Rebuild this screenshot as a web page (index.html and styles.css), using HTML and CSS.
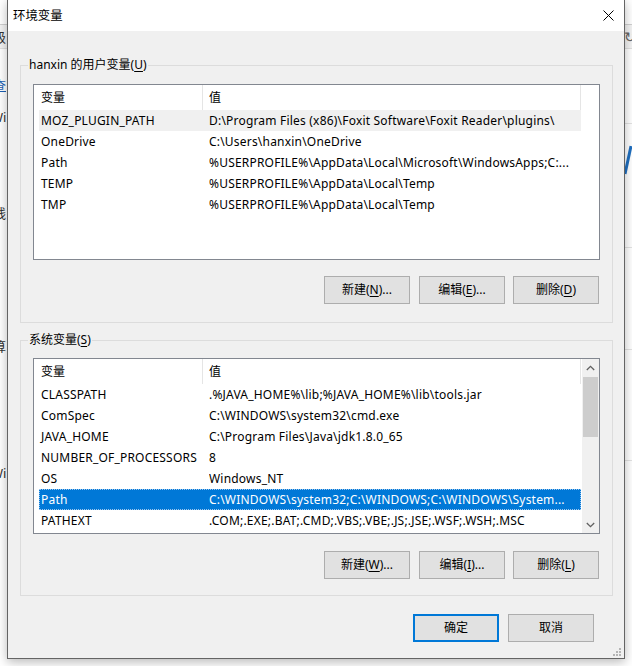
FILE: index.html
```html
<!DOCTYPE html>
<html lang="zh-CN">
<head>
<meta charset="utf-8">
<title>环境变量</title>
<link rel="stylesheet" href="styles.css">
</head>
<body>
<div class="desktop">
  <div class="behind">
    <div class="bh-band"></div>
    <span class="bh-t bh-1">级</span>
    <span class="bh-t bh-link">查</span>
    <span class="bh-t bh-3">Wi</span>
    <span class="bh-t bh-4">线</span>
    <span class="bh-t bh-5">算</span>
    <span class="bh-t bh-6">Wi</span>
    <span class="bh-refresh">↻</span>
    <div class="bh-hl bh-hl1"></div>
    <div class="bh-hl bh-hl2"></div>
    <div class="bh-hl bh-hl3"></div>
    <div class="bh-hl bh-hl4"></div>
    <svg class="bh-chart" width="8" height="40" viewBox="0 0 8 40"><path d="M1 34 L7 6" stroke="#1f6fc0" stroke-width="3" fill="none"/></svg>
  </div>

  <div class="dialog">
    <div class="titlebar">
      <span class="title">环境变量</span>
      <svg class="close" width="11" height="11" viewBox="0 0 11 11"><path d="M0.5 0.5 L10.5 10.5 M10.5 0.5 L0.5 10.5" stroke="#000" stroke-width="1" fill="none"/></svg>
    </div>
    <div class="body">
      <div class="group group-user">
        <span class="group-label">hanxin 的用户变量(<u>U</u>)</span>
        <div class="list list-user">
          <div class="list-main">
            <div class="hdr">
              <div class="hc1">变量</div>
              <div class="hc2">值</div>
              <div class="hc3"></div>
            </div>
            <div class="row row-hover"><div class="c1">MOZ_PLUGIN_PATH</div><div class="c2">D:\Program Files (x86)\Foxit Software\Foxit Reader\plugins\</div></div>
            <div class="row"><div class="c1">OneDrive</div><div class="c2">C:\Users\hanxin\OneDrive</div></div>
            <div class="row"><div class="c1">Path</div><div class="c2">%USERPROFILE%\AppData\Local\Microsoft\WindowsApps;C:...</div></div>
            <div class="row"><div class="c1">TEMP</div><div class="c2">%USERPROFILE%\AppData\Local\Temp</div></div>
            <div class="row"><div class="c1">TMP</div><div class="c2">%USERPROFILE%\AppData\Local\Temp</div></div>
          </div>
        </div>
        <div class="btns btns-user">
          <button class="btn">新建(<u>N</u>)...</button>
          <button class="btn">编辑(<u>E</u>)...</button>
          <button class="btn">删除(<u>D</u>)</button>
        </div>
      </div>

      <div class="group group-sys">
        <span class="group-label">系统变量(<u>S</u>)</span>
        <div class="list list-sys">
          <div class="list-main">
            <div class="hdr">
              <div class="hc1">变量</div>
              <div class="hc2">值</div>
              <div class="hc3"></div>
            </div>
            <div class="row"><div class="c1">CLASSPATH</div><div class="c2">.%JAVA_HOME%\lib;%JAVA_HOME%\lib\tools.jar</div></div>
            <div class="row"><div class="c1">ComSpec</div><div class="c2">C:\WINDOWS\system32\cmd.exe</div></div>
            <div class="row"><div class="c1">JAVA_HOME</div><div class="c2">C:\Program Files\Java\jdk1.8.0_65</div></div>
            <div class="row"><div class="c1">NUMBER_OF_PROCESSORS</div><div class="c2">8</div></div>
            <div class="row"><div class="c1">OS</div><div class="c2">Windows_NT</div></div>
            <div class="row row-selected"><div class="c1">Path</div><div class="c2">C:\WINDOWS\system32;C:\WINDOWS;C:\WINDOWS\System...</div></div>
            <div class="row"><div class="c1">PATHEXT</div><div class="c2">.COM;.EXE;.BAT;.CMD;.VBS;.VBE;.JS;.JSE;.WSF;.WSH;.MSC</div></div>
          </div>
          <div class="vscroll">
            <div class="sb-arrow">
              <svg width="9" height="6" viewBox="0 0 9 6"><path d="M0.8 5 L4.5 1.3 L8.2 5" stroke="#606060" stroke-width="1.3" fill="none"/></svg>
            </div>
            <div class="sb-track">
              <div class="sb-thumb"></div>
            </div>
            <div class="sb-arrow">
              <svg width="9" height="6" viewBox="0 0 9 6"><path d="M0.8 1 L4.5 4.7 L8.2 1" stroke="#606060" stroke-width="1.3" fill="none"/></svg>
            </div>
          </div>
        </div>
        <div class="btns btns-sys">
          <button class="btn">新建(<u>W</u>)...</button>
          <button class="btn">编辑(<u>I</u>)...</button>
          <button class="btn">删除(<u>L</u>)</button>
        </div>
      </div>

      <div class="footer">
        <button class="btn btn-default">确定</button>
        <button class="btn">取消</button>
      </div>
    </div>
    <svg class="grip" width="9" height="9" viewBox="0 0 9 9">
      <rect x="6" y="0" width="2" height="2" fill="#b4b4b4"/>
      <rect x="3" y="3" width="2" height="2" fill="#b4b4b4"/>
      <rect x="6" y="3" width="2" height="2" fill="#b4b4b4"/>
      <rect x="0" y="6" width="2" height="2" fill="#b4b4b4"/>
      <rect x="3" y="6" width="2" height="2" fill="#b4b4b4"/>
      <rect x="6" y="6" width="2" height="2" fill="#b4b4b4"/>
    </svg>
  </div>
</div>
</body>
</html>
```

FILE: styles.css
```css
* { box-sizing: border-box; }
html, body { margin: 0; padding: 0; }
body {
  width: 632px;
  height: 666px;
  overflow: hidden;
  font-family: "Noto Sans", "Noto Sans CJK SC", sans-serif;
  font-size: 12px;
  color: #000;
  background: #fff;
}
u { text-decoration: underline; text-underline-offset: 2px; }

.desktop {
  position: relative;
  width: 632px;
  height: 666px;
  overflow: hidden;
  background: #fff;
}

/* window behind the dialog */
.behind { position: absolute; inset: 0; }
.bh-band {
  position: absolute; left: 0; right: 0; top: 24px; height: 25px;
  background: #f3f3f3;
  border-top: 1px solid #d0d0d0;
  border-bottom: 1px solid #e0e0e0;
}
.bh-t { position: absolute; left: -7px; font-size: 13px; line-height: 16px; color: #333; }
.bh-1 { top: 29px; }
.bh-link { top: 77px; color: #1a5fb4; text-decoration: underline; }
.bh-3 { top: 109px; left: -9px; }
.bh-4 { top: 205px; }
.bh-5 { top: 338px; }
.bh-6 { top: 465px; left: -9px; }
.bh-refresh { position: absolute; left: 624px; top: 28px; font-size: 14px; line-height: 18px; color: #666; }
.bh-hl { position: absolute; left: 624px; right: 0; height: 1px; background: #e3e3e3; }
.bh-hl1 { top: 123px; }
.bh-hl2 { top: 247px; }
.bh-hl3 { top: 349px; }
.bh-hl4 { top: 460px; }
.bh-chart { position: absolute; left: 624px; top: 140px; }

/* dialog window */
.dialog {
  position: absolute;
  left: 7px;
  top: -1px;
  width: 618px;
  height: 660px;
  border: 1px solid #646464;
  background: #f0f0f0;
  box-shadow: 0 3px 10px rgba(0, 0, 0, 0.28);
  display: flex;
  flex-direction: column;
}
.titlebar {
  height: 31px;
  flex: none;
  background: #fff;
  display: flex;
  align-items: center;
  justify-content: space-between;
  padding: 0 10px 0 5px;
}
.title { font-size: 12.4px; line-height: 16px; }
.close { display: block; }

.body {
  flex: 1;
  padding: 34px 11px 0 12px;
  display: flex;
  flex-direction: column;
}

.group {
  position: relative;
  border: 1px solid #dcdcdc;
  padding: 18px 12px 0 12px;
}
.group-user { height: 258px; }
.group-sys { height: 256px; margin-top: 17px; padding-top: 17px; }
.group-label {
  position: absolute;
  left: 7px;
  top: -9px;
  padding: 0 1px;
  background: #f0f0f0;
  line-height: 16px;
  white-space: nowrap;
}

.list {
  width: 567px;
  height: 176px;
  border: 1px solid #828790;
  background: #fff;
  display: flex;
  overflow: hidden;
}
.list-main { flex: 1; min-width: 0; }

.hdr { display: flex; height: 25px; line-height: 25px; }
.hc1 { width: 169px; padding-left: 7px; border-right: 1px solid #e5e5e5; }
.hc2 { width: 378px; padding-left: 6px; border-right: 1px solid #e5e5e5; }
.hc3 { flex: 1; }

.row {
  display: flex;
  margin-left: 5px;
  width: 542px;
  height: 21px;
  line-height: 21px;
  white-space: nowrap;
  letter-spacing: 0.2px;
}
.c1 { width: 170px; padding-left: 2px; flex: none; overflow: hidden; }
.c2 { flex: 1; overflow: hidden; }
.row-hover { background: #f0f0f0; }
.row-selected {
  background: #0078d7;
  color: #fff;
  outline: 1px dotted #9cc6ee;
  outline-offset: -1px;
}

.vscroll {
  width: 17px;
  flex: none;
  background: #f0f0f0;
  display: flex;
  flex-direction: column;
}
.sb-arrow {
  height: 17px;
  flex: none;
  display: flex;
  align-items: center;
  justify-content: center;
}
.sb-track { flex: 1; padding: 1px 1px 0 1px; }
.sb-thumb { height: 60px; background: #cdcdcd; }

.btns {
  display: flex;
  justify-content: flex-end;
  gap: 8px;
  padding-right: 1px;
}
.btns-user { margin-top: 16px; }
.btns-sys { margin-top: 17px; }
.btns .btn:first-child { margin-right: 1px; }

.btn {
  width: 86px;
  height: 28px;
  padding: 0;
  border: 1px solid #adadad;
  background: #e1e1e1;
  font: inherit;
  color: #000;
  line-height: 16px;
  display: flex;
  align-items: center;
  justify-content: center;
}
.btn-default { border: 2px solid #0078d7; }

.footer {
  display: flex;
  justify-content: flex-end;
  gap: 9px;
  margin-top: 18px;
  padding-right: 19px;
}

.grip { position: absolute; right: 2px; bottom: 1px; }
```
